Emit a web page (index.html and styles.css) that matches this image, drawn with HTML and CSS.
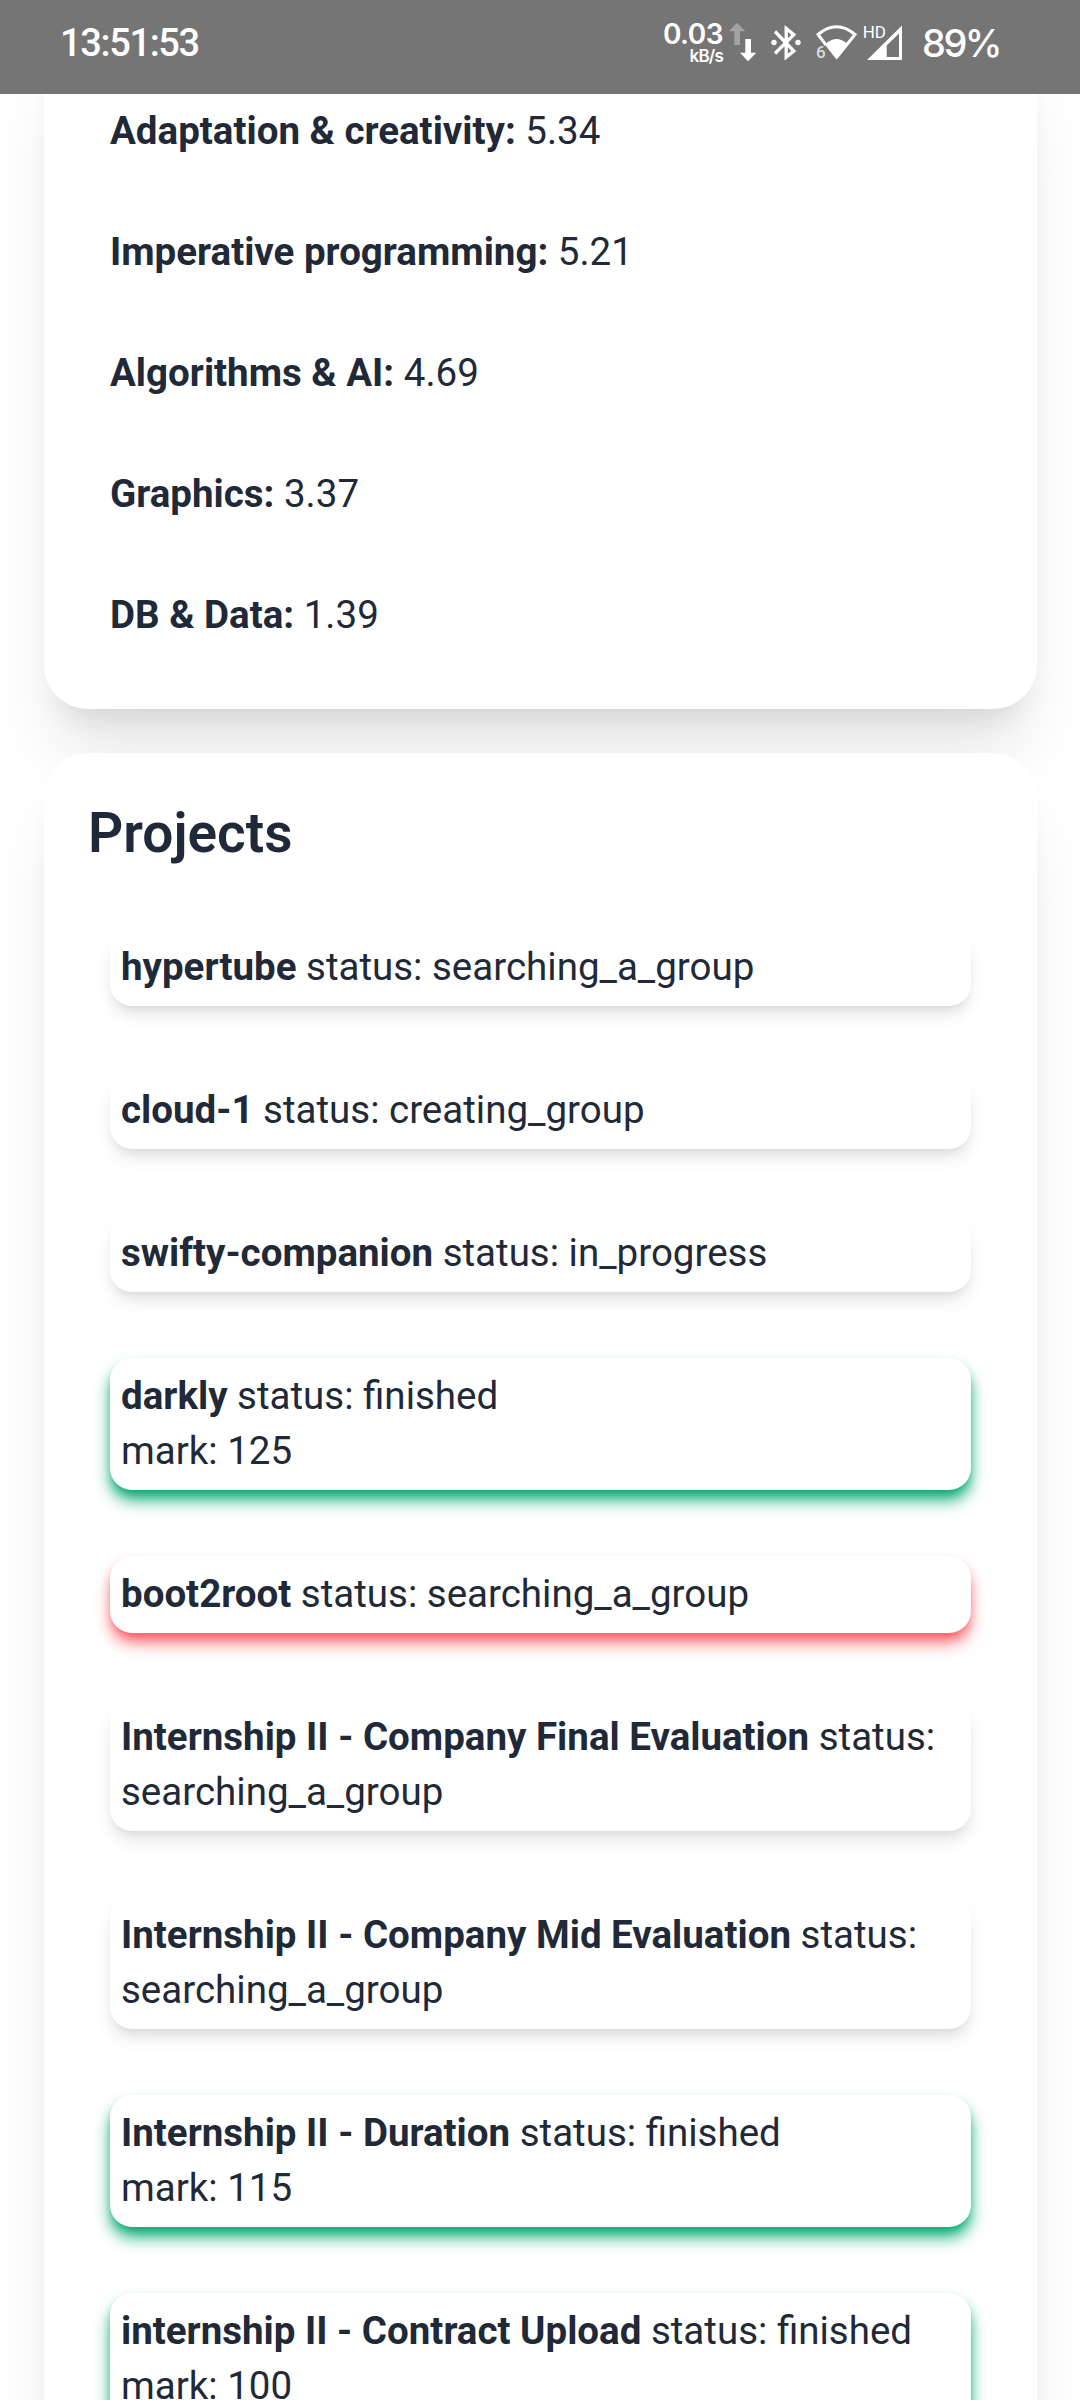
FILE: index.html
```html
<!DOCTYPE html>
<html lang="en">
<head>
<meta charset="utf-8">
<title>Projects</title>
<link rel="stylesheet" href="styles.css">
</head>
<body>
<header class="status-bar">
  <span class="clock">13:51:53</span>
  <div class="indicators">
    <div class="net"><span class="net-rate">0.03</span><span class="net-unit">kB/s</span></div>
    <svg class="arrows" width="28" height="94" viewBox="729 0 28 94">
      <path fill="#a3a3a3" d="M737 22.7L745.2 31.3H740V45H734.3V31.3H729Z"/>
      <path fill="#fff" d="M745.3 39H751V52.7H756.2L748 61.3L740 52.7H745.3Z"/>
    </svg>
    <svg class="bluetooth" width="30" height="94" viewBox="770.5 0 30 94">
      <path fill="none" stroke="#fff" stroke-width="3.3" d="M774.5 31.5L793.3 51L785.7 57V28.5L793.3 34.7L774.5 53.5"/>
      <circle cx="773.5" cy="42.5" r="2.7" fill="#fff"/><circle cx="797.5" cy="42.5" r="2.7" fill="#fff"/>
    </svg>
    <svg class="wifi" width="42" height="94" viewBox="816 0 42 94">
      <path fill="none" stroke="#fff" stroke-width="3" d="M826 45L818 34.5Q836.5 19 855 34.5L836.5 57.5"/>
      <path fill="#fff" d="M826 43.5Q836.5 34.5 847 43.5L848 44.500L836.500 59.500L825.500 45.500Z"/>
      <text class="wifi-gen" x="816" y="58">6</text>
    </svg>
    <svg class="signal" width="40" height="94" viewBox="863 0 40 94">
      <path fill="#fff" fill-rule="evenodd" d="M902 25.5V60H867ZM899 33.5L886.7 45.5V57H899Z"/>
      <text class="hd" x="862.7" y="38.3">HD</text>
    </svg>
    <span class="battery">89%</span>
  </div>
</header>
<main class="page">
  <section class="card skills">
    <p class="skill"><strong>Adaptation &amp; creativity:</strong> 5.34</p>
    <p class="skill"><strong>Imperative programming:</strong> 5.21</p>
    <p class="skill"><strong>Algorithms &amp; AI:</strong> 4.69</p>
    <p class="skill"><strong>Graphics:</strong> 3.37</p>
    <p class="skill"><strong>DB &amp; Data:</strong> 1.39</p>
  </section>
  <section class="card projects">
    <h2 class="title">Projects</h2>
    <div class="list">
      <div class="project"><strong>hypertube</strong> status: searching_a_group</div>
      <div class="project"><strong>cloud-1</strong> status: creating_group</div>
      <div class="project"><strong>swifty-companion</strong> status: in_progress</div>
      <div class="project success"><strong>darkly</strong> status: finished<br>mark: 125</div>
      <div class="project error"><strong>boot2root</strong> status: searching_a_group</div>
      <div class="project"><strong>Internship II - Company Final Evaluation</strong> status: searching_a_group</div>
      <div class="project"><strong>Internship II - Company Mid Evaluation</strong> status: searching_a_group</div>
      <div class="project success"><strong>Internship II - Duration</strong> status: finished<br>mark: 115</div>
      <div class="project success"><strong>internship II - Contract Upload</strong> status: finished<br>mark: 100</div>
    </div>
  </section>
</main>
</body>
</html>
```
FILE: styles.css
```css
* { box-sizing: border-box; }

html { height: 2400px; overflow: hidden; }

body {
  margin: 0;
  width: 1080.75px;
  height: 2400px;
  overflow: hidden;
  background: #fff;
  color: #1f2937;
  font: 400 38.5px/55px Roboto, sans-serif;
}

.status-bar {
  position: relative;
  z-index: 1;
  display: flex;
  justify-content: space-between;
  width: 1080px;
  height: 94px;
  padding: 0 82px 0 60px;
  background: #757575;
  color: #fff;
}

.clock {
  font-size: 38px;
  font-weight: 500;
  line-height: 86px;
  letter-spacing: -1.35px;
}

.indicators { display: flex; }

.net {
  display: flex;
  flex-direction: column;
  align-items: flex-end;
  padding-top: 23px;
  font-family: Inter, sans-serif;
  font-weight: 600;
}

.net-rate { font-size: 28px; line-height: 22px; letter-spacing: -0.5px; }
.net-unit { font-size: 17px; line-height: 22px; letter-spacing: -0.8px; }

.arrows { margin-left: 6px; }
.bluetooth { margin-left: 13.5px; }
.wifi { margin-left: 15.5px; }
.signal { margin-left: 5px; }
.wifi-gen { font: 500 17px Roboto, sans-serif; fill: #ddd; }
.hd { font: 400 17px Roboto, sans-serif; fill: #fff; }

.battery {
  width: 76px;
  margin-left: 19px;
  font: 500 38px/86px Inter, sans-serif;
  letter-spacing: -2.5px;
  white-space: nowrap;
}

.page {
  display: flex;
  flex-direction: column;
  gap: 44px;
  padding: 0 44px;
}

.card {
  border-radius: 44px;
  background: #fff;
  box-shadow: 0 55px 68.75px -13.75px rgb(0 0 0 / 0.1), 0 22px 27.5px -16.5px rgb(0 0 0 / 0.1);
}

.skills {
  display: flex;
  flex-direction: column;
  gap: 66px;
  margin-top: -66px;
  padding: 75px 66px 66.7px;
}

.skill { margin: 0; }

strong { font-weight: 700; }

.projects { padding: 42.5px 44px 66px; }

.title {
  margin: 0;
  font-size: 55px;
  font-weight: 600;
  line-height: 77px;
}

.list {
  display: flex;
  flex-direction: column;
  gap: 66px;
  padding: 56.8px 22px 0;
}

.project {
  padding: 10px 11px 12px;
  border-radius: 22px;
  background: #fff;
  box-shadow: 0 11px 16.5px -2.75px var(--glow, rgb(0 0 0 / 0.1)), 0 5.5px 11px -5.5px var(--glow, rgb(0 0 0 / 0.1));
}

.success { --glow: #00a96e; }
.error { --glow: #ff5861; }
```
